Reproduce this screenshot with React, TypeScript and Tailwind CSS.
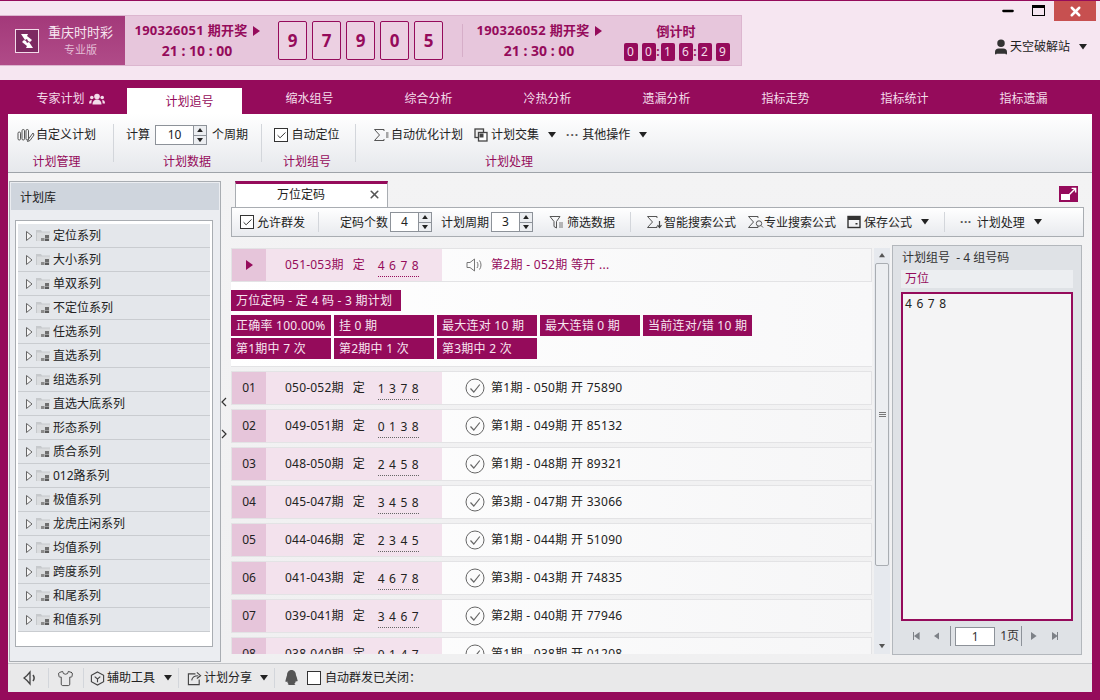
import React from "react";
import { Check, Minus, X, User, Shirt } from "lucide-react";

const Tri = ({ dir = "down", cls = "text-[#222]", s = 5 }: { dir?: "down" | "up" | "right" | "left"; cls?: string; s?: number }) => {
  const p = { down: "0,0 10,0 5,7", up: "0,7 10,7 5,0", right: "0,0 7,5 0,10", left: "7,0 0,5 7,10" }[dir];
  const vb = dir === "down" || dir === "up" ? "0 0 10 7" : "0 0 7 10";
  const w = dir === "down" || dir === "up" ? s * 2 : s * 1.4;
  const h = dir === "down" || dir === "up" ? s * 1.4 : s * 2;
  return (
    <svg viewBox={vb} width={w} height={h} className={`shrink-0 ${cls}`} fill="currentColor">
      <polygon points={p} />
    </svg>
  );
};

const Ico = ({ w = 16, h = 14, cls = "", children }: { w?: number; h?: number; cls?: string; children: React.ReactNode }) => (
  <svg viewBox={`0 0 ${w} ${h}`} width={w} height={h} fill="none" stroke="#555" strokeWidth="1" className={`shrink-0 ${cls}`}>
    {children}
  </svg>
);

const SIGMA = "M11 3V1.500H1.500L6.500 7 1.500 12.500H11V11";
const SigmaList = ({ cls }: { cls?: string }) => (
  <Ico w={17} cls={cls}><path d={SIGMA} /><path d="M13 5h3M13 7h3M13 9h3" strokeDasharray="2 0.5" /></Ico>
);
const SigmaBolt = ({ cls }: { cls?: string }) => (
  <Ico w={17} cls={cls}><path d={SIGMA} /><path d="M13.500 6v6M11.500 10l2 2.500 2-2.500" strokeWidth="1.200" stroke="#444" /></Ico>
);
const SigmaSearch = ({ cls }: { cls?: string }) => (
  <Ico w={17} cls={cls}><path d={SIGMA} /><circle cx="12" cy="8.500" r="2.700" /><path d="M14 10.500l2 2" /></Ico>
);
const FilterIco = ({ cls }: { cls?: string }) => (
  <Ico w={17} cls={cls}><path d="M1 1.500h10L7.500 6.500V13L5 11.500V6.500z" /><path d="M10 8h4M10 10h4M10 12h4" stroke="#777" /></Ico>
);
const SaveIco = ({ cls }: { cls?: string }) => (
  <Ico w={14} cls={cls}><rect x="1" y="1.500" width="12" height="11" stroke="#333" strokeWidth="1.400" /><rect x="1" y="1.500" width="12" height="3.500" fill="#333" stroke="none" /><rect x="8.500" y="8" width="2" height="1.500" fill="#333" stroke="none" /></Ico>
);
const CopyIco = ({ cls }: { cls?: string }) => (
  <Ico w={14} cls={cls}><rect x="1" y="1" width="8.500" height="8.500" stroke="#444" strokeWidth="1.300" fill="#eee" /><rect x="4.500" y="4.500" width="8.500" height="8.500" stroke="#444" strokeWidth="1.300" fill="#fff" /><rect x="5.500" y="5.500" width="4" height="4" fill="#444" stroke="none" /></Ico>
);
const PlanIco = ({ cls }: { cls?: string }) => (
  <Ico w={18} cls={cls}>
    <rect x="1" y="4" width="2.500" height="8" rx="1.200" />
    <rect x="5" y="1.500" width="2.500" height="10.500" rx="1.200" />
    <rect x="9" y="1.500" width="2.500" height="10.500" rx="1.200" />
    <path d="M16 5l-4.500 6-1 2.500 2.500-1L17 7z" />
  </Ico>
);
const TreeFolder = () => (
  <svg viewBox="0 0 16 14" width="16" height="14" className="ml-[3px] shrink-0">
    <path d="M0 1h5l1 1.500h8V12H0z" fill="#c6c9cc" />
    <rect x="1" y="3.500" width="13" height="8.500" fill="#dadcde" />
    <rect x="9" y="6" width="4" height="3" fill="#6e6e6e" />
    <rect x="5" y="9" width="3.500" height="3" fill="#8b8b8b" />
    <rect x="9" y="9.500" width="4" height="2.500" fill="#5a5a5a" />
  </svg>
);
const TreeArrow = () => (
  <svg viewBox="0 0 7 10" width="7" height="10" className="shrink-0"><polygon points="0.500,0.500 6,5 0.500,9.500" fill="#f4f4f4" stroke="#666" /></svg>
);
const Speaker = ({ cls, c = "#777" }: { cls?: string; c?: string }) => (
  <Ico w={20} h={16} cls={cls}>
    <path d="M2 5.500h3L9.500 2v12L5 10.500H2z" stroke={c} />
    <path d="M12 5c1.300 1.700 1.300 4.300 0 6M14.500 3.500c2 2.500 2 6.500 0 9" stroke={c} />
  </Ico>
);
const StatusSpeaker = () => (
  <Ico w={15} h={16}>
    <path d="M1 8l3-2.500 3-3.500v12L4 10.500z" stroke="#444" strokeWidth="1.300" />
    <path d="M10 5c1.300 1.700 1.300 4.300 0 6" stroke="#444" strokeWidth="1.500" />
  </Ico>
);
const CheckCircle = () => (
  <svg viewBox="0 0 20 20" width="20" height="20" fill="none" stroke="#666" className="shrink-0">
    <circle cx="10" cy="10" r="9" />
    <path d="M5.500 10.500l3.300 3.500 6-7.500" strokeWidth="1.200" />
  </svg>
);

const Spin = ({ v, tw }: { v: string; tw: string }) => (
  <div className={`flex h-[20px] ${tw} border border-[#8d9299] bg-white`}>
    <div className="flex-1 text-center text-[12px] leading-[18px] text-[#222]">{v}</div>
    <div className="flex w-[13px] flex-col border-l border-[#8d9299] bg-[#eceef1]">
      <div className="flex flex-1 items-center justify-center border-b border-[#8d9299]"><Tri dir="up" s={3} /></div>
      <div className="flex flex-1 items-center justify-center"><Tri dir="down" s={3} /></div>
    </div>
  </div>
);

const Box = ({ checked }: { checked?: boolean }) => (
  <div className="flex h-[14px] w-[14px] shrink-0 items-center justify-center border border-[#333] bg-white">
    {checked && <Check size={11} strokeWidth={2} className="text-[#222]" />}
  </div>
);

const tabs = ["专家计划", "计划追号", "缩水组号", "综合分析", "冷热分析", "遗漏分析", "指标走势", "指标统计", "指标遗漏"];
const tree = ["定位系列", "大小系列", "单双系列", "不定位系列", "任选系列", "直选系列", "组选系列", "直选大底系列", "形态系列", "质合系列", "012路系列", "极值系列", "龙虎庄闲系列", "均值系列", "跨度系列", "和尾系列", "和值系列"];
const rows = [
  ["01", "050-052期", "1 3 7 8", "第1期 - 050期 开 75890"],
  ["02", "049-051期", "0 1 3 8", "第1期 - 049期 开 85132"],
  ["03", "048-050期", "2 4 5 8", "第1期 - 048期 开 89321"],
  ["04", "045-047期", "3 4 5 8", "第3期 - 047期 开 33066"],
  ["05", "044-046期", "2 3 4 5", "第1期 - 044期 开 51090"],
  ["06", "041-043期", "4 6 7 8", "第3期 - 043期 开 74835"],
  ["07", "039-041期", "3 4 6 7", "第2期 - 040期 开 77946"],
  ["08", "038-040期", "0 1 4 7", "第1期 - 038期 开 01208"],
];

const Chip = ({ w, children }: { w: string; children: React.ReactNode }) => (
  <div className={`${w} h-[21px] whitespace-nowrap bg-[#950b5b] pl-[5px] text-[12px] leading-[21px] tracking-[0.25px] text-[#f7e6f1]`}>{children}</div>
);

const Sep = ({ cls }: { cls: string }) => <div className={`w-px shrink-0 bg-[#d3d6db] ${cls}`} />;

const Digit = ({ v }: { v: string }) => (
  <div className="flex h-[18px] w-[14px] items-center justify-center rounded-[2px] bg-[#950b5b] text-[12px] text-[#f3dcea]">{v}</div>
);

const HeadPeriod = ({ id, time }: { id: string; time: string }) => (
  <div className="flex w-[128px] flex-col items-center text-[13px] font-bold text-[#950b5b]">
    <div className="mt-[1px] flex h-[20px] items-center gap-[5px] whitespace-nowrap tracking-[0.3px]">{id} 期开奖<Tri dir="right" cls="text-[#950b5b]" s={5} /></div>
    <div className="h-[20px] whitespace-pre text-[14px] leading-[20px]">{time}</div>
  </div>
);

export default function App() {
  return (
    <div
      className="flex h-[700px] w-[1100px] flex-col overflow-hidden border-t border-[#950b5b] bg-[#950b5b] text-[12px] text-[#222]"
      style={{ fontFamily: '"Noto Sans","Noto Sans CJK SC",sans-serif' }}
    >
      {/* header */}
      <div className="relative flex h-[79px] bg-[#f6e6f1] pt-[14px]">
        <div className="flex h-[51px] w-[742px] items-stretch border-y border-r border-[#dcb6cf] bg-[#e7c6dc]">
          <div className="flex w-[125px] items-center bg-gradient-to-b from-[#a3397a] to-[#b04b88] pl-[15px]">
            <div className="flex h-[24px] w-[24px] items-center justify-center border border-[#f3dcea] bg-[#7d2a62]">
              <svg viewBox="0 0 20 20" width="20" height="20" fill="#fff"><path d="M4 3l7 0-1 2 5 4-2 2-2-1-1-2-2 1z" /><path d="M16 17l-7 0 1-2-5-4 2-2 2 1 1 2 2-1z" /></svg>
            </div>
            <div className="ml-[9px] flex flex-col items-center text-[#f7e6f1]">
              <div className="text-[13px] leading-[18px]">重庆时时彩</div>
              <div className="text-[11px] leading-[18px] text-[#e3bcd5]">专业版</div>
            </div>
          </div>
          <div className="ml-[8px] flex flex-col justify-center"><HeadPeriod id="190326051" time="21 : 10 : 00" /></div>
          <div className="ml-[17px] flex items-center gap-[5px]">
            {"97905".split("").map((d, i) => (
              <div key={i} className="flex h-[39px] w-[29px] items-center justify-center rounded-[2px] border border-[#950b5b] bg-[#ecd0e2] text-[17px] font-bold text-[#950b5b]">{d}</div>
            ))}
          </div>
          <div className="my-[8px] ml-[19px] w-px bg-[#d6aec8]" />
          <div className="ml-[12px] flex flex-col justify-center"><HeadPeriod id="190326052" time="21 : 30 : 00" /></div>
          <div className="ml-[17px] flex w-[112px] flex-col items-center">
            <div className="mt-[5px] h-[20px] text-[13px] font-bold leading-[20px] text-[#950b5b]">倒计时</div>
            <div className="mt-[2px] flex items-center pl-[1px] text-[#950b5b]">
              <Digit v="0" /><span className="w-[4px]" /><Digit v="0" /><span className="w-[5px] text-center font-bold leading-[14px]">:</span><Digit v="1" /><span className="w-[4px]" /><Digit v="6" /><span className="w-[5px] text-center font-bold leading-[14px]">:</span><Digit v="2" /><span className="w-[4px]" /><Digit v="9" />
            </div>
          </div>
        </div>
        <div className="absolute right-[4px] top-0 flex items-start">
          <Minus size={16} strokeWidth={3.5} className="mt-[2px] text-black" />
          <div className="ml-[16px] mt-[4px] h-[11px] w-[13px] border border-t-[3px] border-black" />
          <div className="ml-[9px] flex h-[20px] w-[42px] items-center justify-center bg-[#c75050]"><X size={15} strokeWidth={4} className="text-white" /></div>
        </div>
        <div className="absolute right-[13px] top-[37px] flex items-center">
          <User size={18} fill="#333" className="text-[#333]" />
          <span className="text-[12px]">天空破解站</span>
          <span className="ml-[9px]"><Tri s={4} /></span>
        </div>
      </div>

      {/* nav */}
      <div className="flex h-[34px] bg-[#950b5b] pl-[12px]">
        {tabs.map((t, i) =>
          i === 1 ? (
            <div key={t} className="mt-[8px] flex h-[26px] w-[115px] items-center justify-center bg-white pl-[10px] pt-[1px] text-[#950b5b]">{t}</div>
          ) : (
            <div key={t} className={`${i === 0 ? "w-[115px] pl-[2px]" : "w-[119px]"} ${i === 2 ? "ml-[8px]" : ""} flex h-[34px] items-center justify-center pt-[3px] text-[#f3dcea]`}>
              {t}
              {i === 0 && (
                <svg viewBox="0 0 16 12" width="16" height="12" className="ml-[4px]" fill="#f3dcea">
                  <circle cx="8" cy="3.500" r="2.800" /><path d="M3.500 11.500c0-3.500 2-5 4.500-5s4.500 1.500 4.500 5z" />
                  <circle cx="2.800" cy="4.500" r="1.800" /><path d="M0 10.500c0-2.500 1-3.500 2.800-3.500L2.300 10.500z" />
                  <circle cx="13.200" cy="4.500" r="1.800" /><path d="M16 10.500c0-2.500-1-3.500-2.800-3.500l.5 3.500z" />
                </svg>
              )}
            </div>
          )
        )}
      </div>

      {/* body */}
      <div className="mx-[8px] flex h-[578px] flex-col bg-[#f1f1f2]">
        {/* ribbon */}
        <div className="flex h-[59px] shrink-0 border-b border-[#9ea3a9] bg-gradient-to-b from-white to-[#e6e8ec]">
          <div className="flex w-[105px] flex-col items-center pr-[8px]">
            <div className="mt-[12px] flex h-[18px] items-center">
              <PlanIco />
              <span className="ml-[1px]">自定义计划</span>
            </div>
            <div className="mt-[9px] text-[#950b5b]">计划管理</div>
          </div>
          <Sep cls="my-[10px]" />
          <div className="flex w-[147px] flex-col items-center pr-[1px]">
            <div className="mt-[11px] flex h-[20px] items-center">
              <span>计算</span>
              <div className="ml-[5px]"><Spin v="10" tw="w-[52px]" /></div>
              <span className="ml-[5px]">个周期</span>
            </div>
            <div className="mt-[8px] text-[#950b5b]">计划数据</div>
          </div>
          <Sep cls="my-[10px]" />
          <div className="flex w-[93px] flex-col items-center pr-[3px]">
            <div className="mt-[12px] flex h-[18px] items-center"><Box checked /><span className="ml-[3px]">自动定位</span></div>
            <div className="mt-[9px] text-[#950b5b]">计划组号</div>
          </div>
          <Sep cls="my-[10px]" />
          <div className="flex flex-col pl-[17px]">
            <div className="mt-[12px] flex h-[18px] items-center whitespace-nowrap">
              <SigmaList /><span className="ml-[1px]">自动优化计划</span>
              <CopyIco cls="ml-[11px]" /><span className="ml-[3px]">计划交集</span><span className="ml-[9px]"><Tri s={4} /></span>
              <span className="ml-[10px] tracking-[1px] font-bold text-[#555]">···</span><span className="ml-[3px]">其他操作</span><span className="ml-[9px]"><Tri s={4} /></span>
            </div>
            <div className="mt-[9px] pl-[112px] text-[#950b5b]">计划处理</div>
          </div>
        </div>

        {/* main */}
        <div className="flex h-[490px] shrink-0 bg-gradient-to-b from-[#f3f3f4] to-[#f0f0f1] pt-[8px]">
          {/* left */}
          <div className="ml-[1px] flex h-[481px] w-[212px] flex-col border border-[#a9adb2] bg-[#ebedf1] p-[1px]">
            <div className="h-[27px] shrink-0 bg-[#cfd5dd] pl-[9px] pt-[1px] leading-[27px]">计划库</div>
            <div className="ml-[4px] mr-[6px] mt-[10px] h-[427px] border border-[#a9adb2] bg-white px-[2px] pt-[3px]">
              {tree.map((t) => (
                <div key={t} className="flex h-[24px] items-center border-b border-[#c9ccd0] bg-[#e4e7eb] pl-[8px]">
                  <TreeArrow />
                  <TreeFolder />
                  <span className="ml-[1px]">{t}</span>
                </div>
              ))}
            </div>
          </div>
          {/* splitter */}
          <div className="flex w-[10px] flex-col items-center pr-[4px] pt-[216px] text-[#555]">
            <svg viewBox="0 0 6 10" width="6" height="10" fill="none" stroke="#333" strokeWidth="1.200"><path d="M5 1L1 5l4 4" /></svg>
            <svg viewBox="0 0 6 10" width="6" height="10" fill="none" stroke="#333" strokeWidth="1.200" className="mt-[22px]"><path d="M1 1l4 4-4 4" /></svg>
          </div>
          {/* right */}
          <div className="flex w-[861px] flex-col">
            <div className="flex h-[26px] items-end pl-[4px]">
              <div className="flex h-[26px] w-[153px] items-center border-x border-t-[3px] border-[#a9adb2] border-t-[#950b5b] bg-white pb-[2px] pl-[41px]">
                <span>万位定码</span>
                <X size={13} strokeWidth={3} className="ml-[43px] text-[#555]" />
              </div>
              <div className="relative mb-[5px] ml-[671px] h-[16px] w-[19px] bg-[#950b5b]">
                <div className="absolute bottom-[2px] left-[2px] h-[6px] w-[9px] bg-white" />
                <svg viewBox="0 0 10 10" width="9" height="9" className="absolute right-[1px] top-[1px]" stroke="#fff" strokeWidth="1.6" fill="none"><path d="M1 9L8 2M4 1.5h4.5V6" /></svg>
              </div>
            </div>
            <div className="flex h-[30px] w-[853px] shrink-0 items-center whitespace-nowrap border border-[#a9adb2] bg-gradient-to-b from-white to-[#e8eaee] pl-[8px]">
              <Box checked />
              <span className="ml-[3px] mt-[1px]">允许群发</span>
              <Sep cls="ml-[13px] h-[20px]" />
              <span className="ml-[21px] mt-[1px]">定码个数</span>
              <div className="ml-[2px]"><Spin v="4" tw="w-[42px]" /></div>
              <span className="ml-[9px] mt-[1px]">计划周期</span>
              <div className="ml-[2px]"><Spin v="3" tw="w-[42px]" /></div>
              <FilterIco cls="ml-[16px]" />
              <span className="ml-[1px] mt-[1px]">筛选数据</span>
              <Sep cls="ml-[15px] h-[20px]" />
              <SigmaBolt cls="ml-[15px]" />
              <span className="ml-[1px] mt-[1px]">智能搜索公式</span>
              <SigmaSearch cls="ml-[11px]" />
              <span className="ml-[0px] mt-[1px]">专业搜索公式</span>
              <SaveIco cls="ml-[11px]" />
              <span className="ml-[3px] mt-[1px]">保存公式</span>
              <span className="ml-[9px]"><Tri s={4} /></span>
              <Sep cls="ml-[15px] h-[20px]" />
              <span className="ml-[15px] tracking-[0.5px] font-bold text-[#555]">···</span>
              <span className="ml-[5px] mt-[1px]">计划处理</span>
              <span className="ml-[9px]"><Tri s={4} /></span>
            </div>

            <div className="mt-[8px] flex">
              {/* list */}
              <div className="mt-[3px] h-[406px] w-[641px] overflow-hidden">
                <div className="flex h-[34px] border border-[#e3e3e5] bg-gradient-to-r from-white to-[#f6f6f7]">
                  <div className="flex w-[34px] items-center justify-center bg-[#e6c5da]"><Tri dir="right" cls="text-[#950b5b]" s={5} /></div>
                  <div className="flex w-[176px] items-center bg-[#f3e2ed] pl-[19px] text-[#950b5b]">
                    <span className="tracking-[0.2px]">051-053期</span><span className="ml-[9px]">定</span>
                    <span className="ml-[13px] mt-[3px] border-b border-dotted border-[#950b5b] pb-[1px] tracking-[0.7px]">4 6 7 8</span>
                  </div>
                  <div className="flex items-center pl-[23px] text-[#950b5b]">
                    <Speaker />
                    <span className="ml-[6px] tracking-[0.3px]">第2期 - 052期 等开 ...</span>
                  </div>
                </div>
                <div className="flex h-[85px] flex-col gap-[2px] border-b border-[#e3e3e5] bg-gradient-to-r from-white to-[#f8f8f9] pt-[8px]">
                  <Chip w="w-[170px]">万位定码 - 定 4 码 - 3 期计划</Chip>
                  <div className="mt-[2px] flex gap-[3px]">
                    <Chip w="w-[100px]">正确率 100.00%</Chip><Chip w="w-[100px]">挂 0 期</Chip><Chip w="w-[100px]">最大连对 10 期</Chip><Chip w="w-[100px]">最大连错 0 期</Chip><Chip w="w-[109px]">当前连对/错 10 期</Chip>
                  </div>
                  <div className="flex gap-[3px]">
                    <Chip w="w-[100px]">第1期中 7 次</Chip><Chip w="w-[100px]">第2期中 1 次</Chip><Chip w="w-[100px]">第3期中 2 次</Chip>
                  </div>
                </div>
                {rows.map(([n, r, d, t]) => (
                  <div key={n} className="mt-[4px] flex h-[34px] border border-[#e3e3e5] bg-gradient-to-r from-white to-[#f6f6f7] first:mt-[5px]">
                    <div className="flex w-[34px] items-center justify-center bg-[#e6c5da]">{n}</div>
                    <div className="flex w-[176px] items-center bg-[#f3e2ed] pl-[19px]">
                      <span className="tracking-[0.2px]">{r}</span><span className="ml-[9px]">定</span>
                      <span className="ml-[13px] mt-[3px] border-b border-dotted border-[#666] pb-[1px] tracking-[0.7px]">{d}</span>
                    </div>
                    <div className="flex items-center pl-[23px]">
                      <CheckCircle />
                      <span className="ml-[6px] tracking-[0.3px]">{t}</span>
                    </div>
                  </div>
                ))}
              </div>
              {/* scrollbar */}
              <div className="ml-[2px] mt-[3px] flex h-[406px] w-[16px] flex-col items-center bg-[#e6e9ee]">
                <div className="flex h-[15px] items-center justify-center"><Tri dir="up" cls="text-[#555]" s={3} /></div>
                <div className="flex h-[303px] w-[14px] items-center justify-center rounded-[2px] border border-[#a9adb2] bg-[#eceef1]">
                  <svg viewBox="0 0 7 7" width="7" height="7" stroke="#777"><path d="M0 1.500h7M0 3.500h7M0 5.500h7" /></svg>
                </div>
                <div className="mt-auto flex h-[15px] items-center justify-center"><Tri dir="down" cls="text-[#555]" s={3} /></div>
              </div>
              {/* group */}
              <div className="ml-[2px] flex h-[410px] w-[190px] flex-col border border-[#b3b7bc] bg-[#dfe2e6] pl-[8px] pr-[8px]">
                <div className="mt-[2px] h-[20px] whitespace-pre pl-[1px] leading-[20px] text-[#333]">计划组号  - 4 组号码</div>
                <div className="mt-[2px] h-[18px] bg-[#eceef1] pl-[4px] leading-[18px] text-[#950b5b]">万位</div>
                <div className="mt-[4px] h-[329px] border-2 border-[#950b5b] bg-[#f4f4f5] pl-[2px] pt-[1px] tracking-[0.7px]">4 6 7 8</div>
                <div className="mt-[5px] flex h-[20px] items-center text-[#333]">
                  <span className="ml-[12px] flex items-center text-[#7d8187]"><span className="h-[8px] w-px bg-[#7d8187]" /><Tri dir="left" cls="text-[#7d8187]" s={4} /></span>
                  <span className="ml-[14px]"><Tri dir="left" cls="text-[#7d8187]" s={4} /></span>
                  <div className="ml-[11px] h-[20px] w-px bg-[#8d9299]" />
                  <div className="ml-[4px] h-[19px] w-[40px] border border-[#8d9299] bg-white text-center leading-[17px]">1</div>
                  <span className="ml-[5px]">1页</span>
                  <div className="ml-[2px] h-[20px] w-px bg-[#8d9299]" />
                  <span className="ml-[9px]"><Tri dir="right" cls="text-[#7d8187]" s={4} /></span>
                  <span className="ml-[15px] flex items-center"><Tri dir="right" cls="text-[#7d8187]" s={4} /><span className="h-[8px] w-px bg-[#7d8187]" /></span>
                </div>
              </div>
            </div>
          </div>
        </div>

        {/* status */}
        <div className="flex h-[29px] shrink-0 items-center border-t border-[#c4c6c9] bg-[#e9e9ea] pl-[15px]">
          <StatusSpeaker />
          <Sep cls="ml-[10px] h-[20px]" />
          <Shirt size={17} strokeWidth={1.3} className="ml-[8px] text-[#444]" />
          <Sep cls="ml-[9px] h-[20px]" />
          <svg viewBox="0 0 16 16" width="15" height="15" fill="none" stroke="#444" strokeWidth="1.200" className="ml-[6px] shrink-0">
            <path d="M8 1l6.500 3.500v7L8 15l-6.500-3.500v-7z" /><path d="M5 6l3 2.500L11 6M8 8.500V12" />
          </svg>
          <span className="ml-[2px]">辅助工具</span>
          <span className="ml-[9px]"><Tri s={4} /></span>
          <Sep cls="ml-[6px] h-[20px]" />
          <svg viewBox="0 0 16 16" width="15" height="15" fill="none" stroke="#444" strokeWidth="1.200" className="ml-[8px] shrink-0">
            <path d="M9 3H1.500v11.500H13V9" /><path d="M5 10c.5-3.500 3-5 7-5M10.500 1.500L14.500 5l-4 3" />
          </svg>
          <span className="ml-[2px]">计划分享</span>
          <span className="ml-[8px]"><Tri s={4} /></span>
          <Sep cls="ml-[6px] h-[20px]" />
          <svg viewBox="0 0 16 18" width="15" height="16" className="ml-[9px] shrink-0" fill="#555"><path d="M8 0c3 0 5 2.500 5 5.500l1 3 1 4-1.500.5-.5-1c-.5 2-1 3-2 3.500l1.500 1.500H3.500L5 16c-1-.5-1.500-1.500-2-3.500l-.5 1L1 13l1-4 1-3.500C3 2.500 5 0 8 0z" /></svg>
          <div className="ml-[8px]"><Box /></div>
          <span className="ml-[4px]">自动群发已关闭：</span>
        </div>
      </div>
    </div>
  );
}
